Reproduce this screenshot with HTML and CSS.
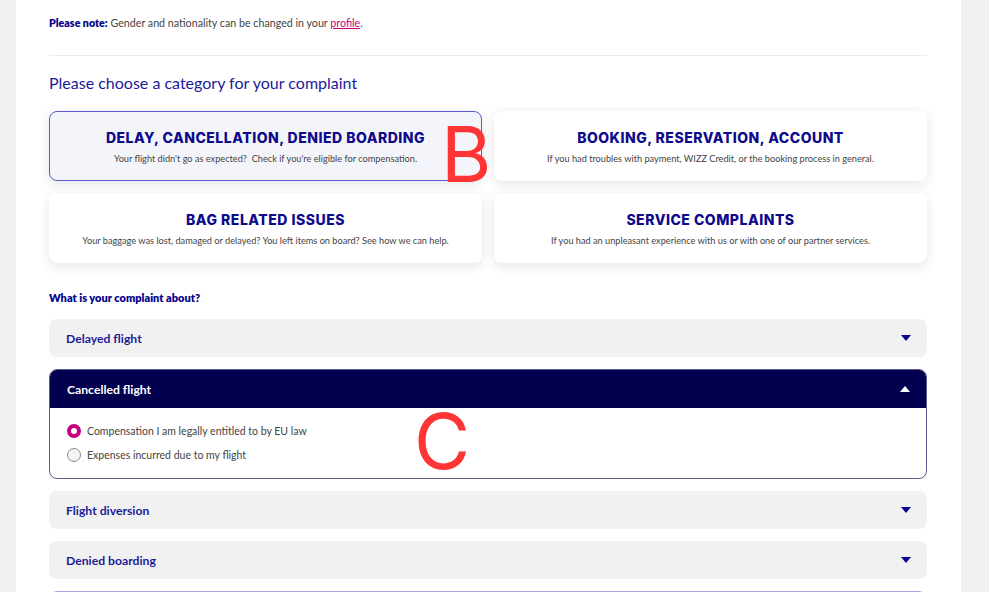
FILE: index.html
```html
<!DOCTYPE html>
<html>
<head>
<meta charset="utf-8">
<link rel="stylesheet" href="styles.css">
</head>
<body>
<div class="page">
  <p class="note"><b>Please note:</b> Gender and nationality can be changed in your <a href="#">profile</a>.</p>
  <hr class="divider">
  <h2 class="title">Please choose a category for your complaint</h2>
  <div class="cards">
    <div class="card selected">
      <div class="card-title">DELAY, CANCELLATION, DENIED BOARDING</div>
      <div class="card-sub">Your flight didn't go as expected?&nbsp; Check if you're eligible for compensation.</div>
      <span class="mark mark-b">B</span>
    </div>
    <div class="card">
      <div class="card-title">BOOKING, RESERVATION, ACCOUNT</div>
      <div class="card-sub">If you had troubles with payment, WIZZ Credit, or the booking process in general.</div>
    </div>
    <div class="card">
      <div class="card-title">BAG RELATED ISSUES</div>
      <div class="card-sub">Your baggage was lost, damaged or delayed? You left items on board? See how we can help.</div>
    </div>
    <div class="card">
      <div class="card-title">SERVICE COMPLAINTS</div>
      <div class="card-sub">If you had an unpleasant experience with us or with one of our partner services.</div>
    </div>
  </div>
  <div class="label">What is your complaint about?</div>
  <div class="acc">
    <div class="acc-item">
      <div class="acc-head"><span>Delayed flight</span><span class="tri down"></span></div>
    </div>
    <div class="acc-item open">
      <div class="acc-head"><span>Cancelled flight</span><span class="tri up"></span></div>
      <div class="acc-body">
        <label class="radio"><span class="dot on"></span>Compensation I am legally entitled to by EU law</label>
        <label class="radio"><span class="dot"></span>Expenses incurred due to my flight</label>
        <span class="mark mark-c">C</span>
      </div>
    </div>
    <div class="acc-item">
      <div class="acc-head"><span>Flight diversion</span><span class="tri down"></span></div>
    </div>
    <div class="acc-item">
      <div class="acc-head"><span>Denied boarding</span><span class="tri down"></span></div>
    </div>
    <div class="acc-item next"></div>
  </div>
</div>
</body>
</html>
```
FILE: styles.css
```css
html, body {
  margin: 0;
  padding: 0;
  background: #f1f1f1;
  height: 592px;
  overflow: hidden;
}
body {
  font-family: "Lato", "Open Sans", sans-serif;
}
.page {
  margin-left: 16px;
  width: 945px;
  box-sizing: border-box;
  padding: 16px 34px 0 33px;
  background: #fff;
  min-height: 592px;
}
.note {
  margin: 0;
  font-size: 10.7px;
  line-height: 14px;
  color: #444;
}
.note b {
  color: #06038d;
  font-weight: 800;
}
.note a {
  color: #c6007e;
  text-decoration: underline;
}
.divider {
  border: 0;
  border-top: 1px solid #ececec;
  margin: 25px 0 0;
}
.title {
  margin: 16px 0 0;
  font-size: 16px;
  line-height: 22px;
  font-weight: 400;
  color: #1b1b99;
}
.cards {
  margin-top: 17px;
  display: grid;
  grid-template-columns: 1fr 1fr;
  gap: 12px;
}
.card {
  position: relative;
  height: 70px;
  box-sizing: border-box;
  background: #fff;
  border-radius: 8px;
  box-shadow: 0 3px 12px rgba(40, 40, 80, 0.12);
  display: flex;
  flex-direction: column;
  align-items: center;
  justify-content: center;
  gap: 7px;
  padding-top: 1px;
}
.card.selected {
  background: #f4f5fa;
  border: 1px solid #5a5ac8;
}
.card-title {
  font-family: "Inter", sans-serif;
  font-weight: 800;
  font-size: 14px;
  line-height: 17px;
  letter-spacing: 0.5px;
  color: #0d0a8c;
}
.card-sub {
  font-size: 9.2px;
  line-height: 12px;
  color: #444;
}
.mark {
  position: absolute;
  font-family: "Inter", sans-serif;
  color: #ff3535;
  font-weight: 400;
  font-size: 77px;
  line-height: 1;
}
.mark-b {
  left: 391px;
  top: 4px;
}
.mark-c {
  left: 364px;
  top: -5px;
}
.label {
  margin-top: 28px;
  font-size: 11px;
  line-height: 14px;
  font-weight: 800;
  color: #06038d;
}
.acc {
  margin-top: 14px;
  display: flex;
  flex-direction: column;
  gap: 12px;
}
.acc-item {
  border-radius: 8px;
  background: #f1f1f1;
}
.acc-head {
  height: 38px;
  display: flex;
  align-items: center;
  justify-content: space-between;
  padding: 0 16px 0 17px;
  font-size: 12.2px;
  font-weight: 700;
  color: #1b1b99;
}
.acc-item.open {
  background: #fff;
  border: 1px solid #5c5c8e;
}
.acc-item.open .acc-head {
  background: #03004f;
  color: #fff;
  border-radius: 7px 7px 0 0;
}
.acc-body {
  position: relative;
  height: 70px;
  box-sizing: border-box;
  padding: 15px 17px 0;
  display: flex;
  flex-direction: column;
  gap: 8px;
}
.radio {
  display: flex;
  align-items: center;
  gap: 6px;
  font-size: 10.5px;
  line-height: 16px;
  color: #444;
}
.dot {
  width: 14px;
  height: 14px;
  box-sizing: border-box;
  border-radius: 50%;
  border: 1px solid #8a8a8a;
  background: #f4f4f4;
}
.dot.on {
  border: 4px solid #c6007e;
  background: #fff;
}
.tri {
  width: 0;
  height: 0;
  border-left: 5px solid transparent;
  border-right: 5px solid transparent;
}
.tri.down {
  border-top: 6px solid #06038d;
}
.tri.up {
  border-bottom: 6px solid #fff;
}
.acc-item.next {
  height: 20px;
  border: 1px solid #a8a8e0;
  background: #f6f6ff;
}
```
